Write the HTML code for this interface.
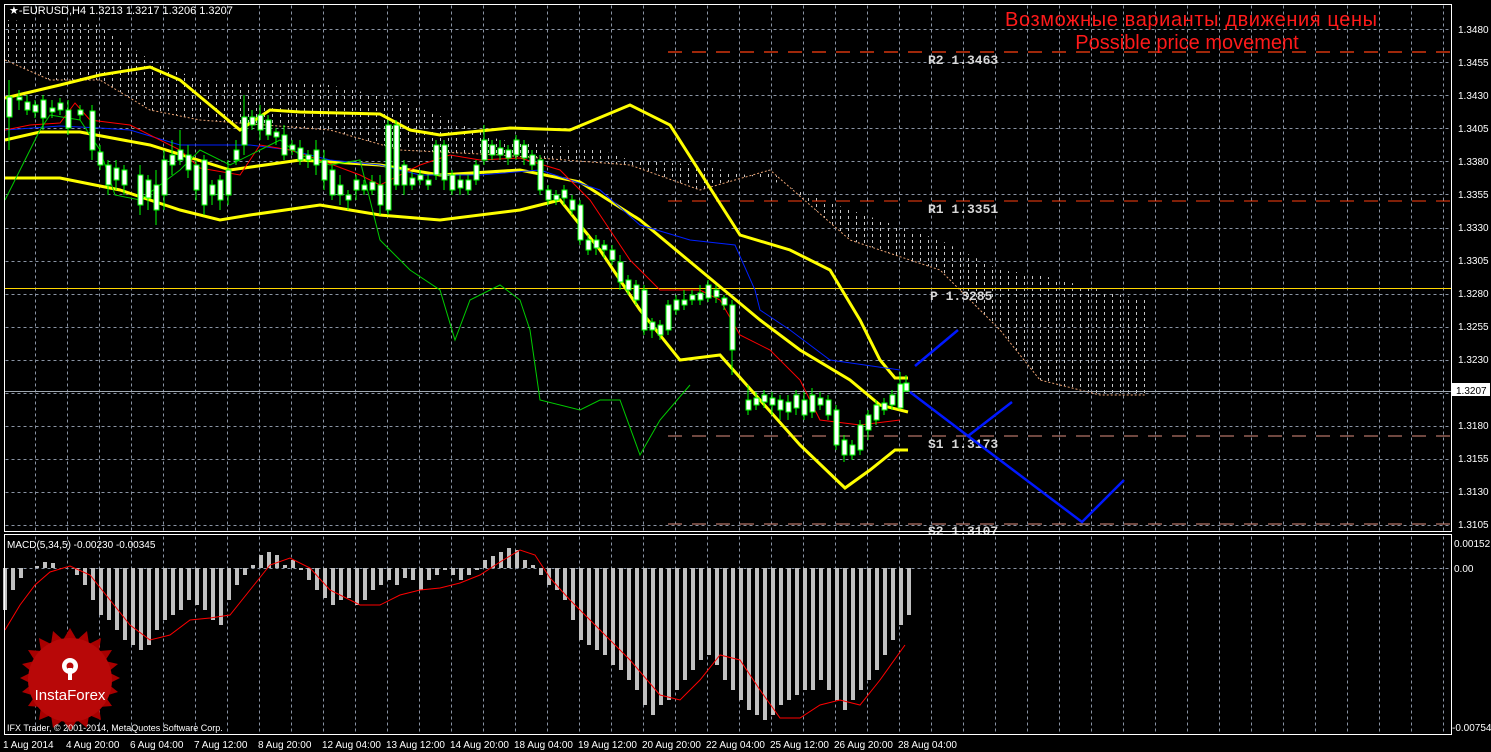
<!DOCTYPE html><html><head><meta charset="utf-8"><style>
html,body{margin:0;padding:0;background:#000;}
svg{display:block;font-family:"Liberation Sans",sans-serif;}
</style></head><body>
<svg width="1491" height="752" viewBox="0 0 1491 752" xmlns="http://www.w3.org/2000/svg">
<defs>
<pattern id="hatch" width="8" height="6" patternUnits="userSpaceOnUse"><rect x="0" y="0" width="1" height="3" fill="#dcdcdc"/></pattern>
</defs>
<rect width="1491" height="752" fill="#000"/>
<!-- grid -->
<g stroke="#8a94a4" stroke-width="1" stroke-dasharray="3,3" transform="translate(0.5,0.5)" shape-rendering="crispEdges">
<path d="M35 5V531M67 5V531M99 5V531M131 5V531M163 5V531M195 5V531M227 5V531M259 5V531M291 5V531M323 5V531M355 5V531M387 5V531M419 5V531M451 5V531M483 5V531M515 5V531M547 5V531M579 5V531M611 5V531M643 5V531M675 5V531M707 5V531M739 5V531M771 5V531M803 5V531M835 5V531M867 5V531M899 5V531M931 5V531M963 5V531M995 5V531M1027 5V531M1059 5V531M1091 5V531M1123 5V531M1155 5V531M1187 5V531M1219 5V531M1251 5V531M1283 5V531M1315 5V531M1347 5V531M1379 5V531M1411 5V531M1443 5V531"/>
<path d="M35 536V734M67 536V734M99 536V734M131 536V734M163 536V734M195 536V734M227 536V734M259 536V734M291 536V734M323 536V734M355 536V734M387 536V734M419 536V734M451 536V734M483 536V734M515 536V734M547 536V734M579 536V734M611 536V734M643 536V734M675 536V734M707 536V734M739 536V734M771 536V734M803 536V734M835 536V734M867 536V734M899 536V734M931 536V734M963 536V734M995 536V734M1027 536V734M1059 536V734M1091 536V734M1123 536V734M1155 536V734M1187 536V734M1219 536V734M1251 536V734M1283 536V734M1315 536V734M1347 536V734M1379 536V734M1411 536V734M1443 536V734"/>
<path d="M5 29H1451M5 62H1451M5 95H1451M5 128H1451M5 161H1451M5 194H1451M5 228H1451M5 261H1451M5 294H1451M5 327H1451M5 360H1451M5 393H1451M5 426H1451M5 459H1451M5 492H1451M5 525H1451M5 568H1451"/>
</g>
<!-- cloud -->
<path d="M5 20L100 25L150 60L200 80L330 85L400 100L500 140L600 150L630 160L700 165L770 180L850 210L940 240L1000 270L1040 275L1100 290L1145 300L1145 395L1100 395L1040 380L1000 330L940 270L850 240L770 170L700 190L630 165L500 155L400 150L330 130L200 120L150 110L100 80L50 80L5 60Z" fill="url(#hatch)" opacity="0.9"/>
<polyline points="5,60 50,80 100,80 150,110 200,120 330,130 400,150 500,155 630,165 700,190 770,170 850,240 940,270 1000,330 1040,380 1100,395 1145,395" fill="none" stroke="#e8a070" stroke-width="1" stroke-dasharray="2,2"/>
<!-- levels -->
<path d="M668 52H1451" stroke="#ff4010" stroke-width="1.3" stroke-dasharray="14,10"/>
<path d="M668 201H1451" stroke="#ff4010" stroke-width="1" stroke-dasharray="14,10"/>
<path d="M668 436H1451" stroke="#e09080" stroke-width="1" stroke-dasharray="14,10"/>
<path d="M668 524H1451" stroke="#e09080" stroke-width="1" stroke-dasharray="14,10"/>
<path d="M5 288.5H1451" stroke="#ffd700" stroke-width="1"/>
<path d="M5 391.5H1451" stroke="#a0a8b0" stroke-width="1"/>
<g font-family="Liberation Mono,monospace" font-size="13" fill="#d8d8d8" font-weight="bold">
<text x="928" y="64">R2 1.3463</text><text x="928" y="213">R1 1.3351</text><text x="930" y="300">P 1.3285</text><text x="928" y="448">S1 1.3173</text><text x="928" y="535">S2 1.3107</text>
</g>
<!-- bands -->
<g fill="none" stroke="#ffff00" stroke-width="3">
<polyline points="5,98 60,85 100,75 150,67 180,80 240,130 270,110 300,112 380,114 410,130 440,135 510,128 570,130 630,105 670,125 740,235 790,250 830,270 860,320 880,360 895,378 908,378"/>
<polyline points="5,140 40,132 80,132 150,145 230,170 300,160 380,165 440,175 520,170 580,182 640,220 700,270 760,320 800,350 850,380 880,405 908,412"/>
<polyline points="5,178 60,178 120,190 180,210 220,220 250,215 320,205 380,215 440,220 520,210 560,200 600,250 640,310 680,360 720,355 760,400 800,445 845,488 870,470 895,450 908,450"/>
</g>
<polyline points="5,130 60,126 100,128 130,130 180,145 250,145 290,150 330,160 380,165 420,175 480,175 540,170 600,190 640,225 690,240 735,245 755,290 760,310 790,330 830,360 900,370" fill="none" stroke="#0020ff" stroke-width="1"/>
<polyline points="5,130 30,125 60,123 75,103 90,120 130,125 180,150 200,168 240,175 260,145 290,150 320,160 360,175 380,185 420,165 450,155 480,160 520,158 560,170 590,200 610,230 630,260 660,290 700,290 720,300 740,335 770,350 800,380 820,420 860,425 900,420" fill="none" stroke="#ff0000" stroke-width="1"/>
<polyline points="5,200 15,180 30,150 40,130 50,115 80,120 100,150 115,195 140,200 180,170 200,150 230,165 260,150 280,140 300,155 330,165 360,160 370,200 380,240 410,270 440,290 455,340 470,300 500,285 520,300 530,330 540,400 580,410 600,400 620,400 640,455 660,420 690,385" fill="none" stroke="#00cc00" stroke-width="1"/>
<!-- candles -->
<path stroke="#00ff00" stroke-width="1" fill="none" d="M9 80V150M19 90V110M27 95V115M35 100V118M43 95V130M52 100V118M60 98V115M68 100V135M80 105V120M92 105V160M100 145V170M108 160V195M116 160V190M124 165V195M140 165V215M148 175V210M156 170V225M164 150V210M172 140V175M180 130V165M188 145V178M196 160V200M204 155V215M212 180V205M220 175V210M228 160V205M236 140V165M244 95V155M252 110V130M260 105V140M268 115V140M276 128V145M284 125V160M292 140V155M300 140V165M308 150V168M316 140V175M324 150V190M332 165V200M340 175V205M348 190V210M356 175V200M364 180V195M372 175V195M380 175V215M388 120V215M396 120V190M404 160V195M412 172V190M420 170V185M428 175V190M436 140V180M444 140V190M452 170V195M460 175V195M468 175V195M476 160V185M484 125V165M492 140V160M500 140V160M508 145V165M516 135V160M524 140V165M532 150V170M540 155V195M548 185V205M556 190V205M564 185V205M572 195V215M580 200V245M588 235V255M596 235V255M604 240V258M612 245V265M620 255V290M628 275V295M636 280V305M644 285V335M652 318V338M660 320V340M668 300V335M676 295V315M684 290V310M692 290V305M700 285V305M708 280V302M716 285V303M724 295V310M732 300V375M748 385V415M756 392V410M764 390V408M772 392V415M780 395V420M788 395V420M796 390V415M804 392V420M812 388V418M820 392V410M828 395V420M836 405V450M844 435V462M852 440V460M860 420V455M868 410V440M876 400V425M884 398V415M892 390V410M900 372V400M906 375V392"/>
<g fill="#fff" stroke="#00ff00" stroke-width="1">
<rect x="7" y="97" width="5" height="20"/><rect x="17" y="97" width="5" height="3"/><rect x="25" y="102" width="5" height="8"/><rect x="33" y="105" width="5" height="7"/><rect x="41" y="100" width="5" height="18"/><rect x="50" y="108" width="5" height="4"/><rect x="58" y="103" width="5" height="7"/><rect x="66" y="110" width="5" height="18"/><rect x="78" y="110" width="5" height="5"/><rect x="90" y="111" width="5" height="39"/><rect x="98" y="152" width="5" height="13"/><rect x="106" y="165" width="5" height="20"/><rect x="114" y="168" width="5" height="12"/><rect x="122" y="170" width="5" height="15"/><rect x="138" y="175" width="5" height="30"/><rect x="146" y="180" width="5" height="18"/><rect x="154" y="185" width="5" height="25"/><rect x="162" y="160" width="5" height="35"/><rect x="170" y="155" width="5" height="10"/><rect x="178" y="150" width="5" height="10"/><rect x="186" y="155" width="5" height="15"/><rect x="194" y="165" width="5" height="25"/><rect x="202" y="160" width="5" height="45"/><rect x="210" y="185" width="5" height="10"/><rect x="218" y="180" width="5" height="20"/><rect x="226" y="170" width="5" height="25"/><rect x="234" y="150" width="5" height="10"/><rect x="242" y="117" width="5" height="28"/><rect x="250" y="117" width="5" height="8"/><rect x="258" y="115" width="5" height="15"/><rect x="266" y="120" width="5" height="15"/><rect x="274" y="132" width="5" height="5"/><rect x="282" y="135" width="5" height="20"/><rect x="290" y="145" width="5" height="5"/><rect x="298" y="148" width="5" height="12"/><rect x="306" y="155" width="5" height="5"/><rect x="314" y="150" width="5" height="15"/><rect x="322" y="160" width="5" height="20"/><rect x="330" y="170" width="5" height="25"/><rect x="338" y="185" width="5" height="10"/><rect x="346" y="195" width="5" height="5"/><rect x="354" y="180" width="5" height="10"/><rect x="362" y="185" width="5" height="5"/><rect x="370" y="182" width="5" height="8"/><rect x="378" y="185" width="5" height="20"/><rect x="386" y="125" width="5" height="85"/><rect x="394" y="125" width="5" height="60"/><rect x="402" y="165" width="5" height="20"/><rect x="410" y="178" width="5" height="7"/><rect x="418" y="175" width="5" height="5"/><rect x="426" y="180" width="5" height="5"/><rect x="434" y="145" width="5" height="30"/><rect x="442" y="145" width="5" height="35"/><rect x="450" y="175" width="5" height="15"/><rect x="458" y="180" width="5" height="8"/><rect x="466" y="180" width="5" height="10"/><rect x="474" y="165" width="5" height="15"/><rect x="482" y="140" width="5" height="20"/><rect x="490" y="145" width="5" height="10"/><rect x="498" y="148" width="5" height="7"/><rect x="506" y="150" width="5" height="8"/><rect x="514" y="140" width="5" height="15"/><rect x="522" y="145" width="5" height="13"/><rect x="530" y="155" width="5" height="10"/><rect x="538" y="160" width="5" height="30"/><rect x="546" y="190" width="5" height="10"/><rect x="554" y="195" width="5" height="5"/><rect x="562" y="190" width="5" height="8"/><rect x="570" y="200" width="5" height="10"/><rect x="578" y="205" width="5" height="35"/><rect x="586" y="240" width="5" height="10"/><rect x="594" y="240" width="5" height="8"/><rect x="602" y="245" width="5" height="5"/><rect x="610" y="250" width="5" height="10"/><rect x="618" y="262" width="5" height="20"/><rect x="626" y="280" width="5" height="10"/><rect x="634" y="285" width="5" height="15"/><rect x="642" y="290" width="5" height="40"/><rect x="650" y="322" width="5" height="8"/><rect x="658" y="325" width="5" height="10"/><rect x="666" y="305" width="5" height="25"/><rect x="674" y="300" width="5" height="10"/><rect x="682" y="300" width="5" height="5"/><rect x="690" y="295" width="5" height="5"/><rect x="698" y="293" width="5" height="7"/><rect x="706" y="285" width="5" height="13"/><rect x="714" y="290" width="5" height="7"/><rect x="722" y="298" width="5" height="7"/><rect x="730" y="305" width="5" height="45"/><rect x="746" y="400" width="5" height="10"/><rect x="754" y="398" width="5" height="7"/><rect x="762" y="395" width="5" height="7"/><rect x="770" y="398" width="5" height="7"/><rect x="778" y="400" width="5" height="10"/><rect x="786" y="402" width="5" height="10"/><rect x="794" y="395" width="5" height="13"/><rect x="802" y="400" width="5" height="15"/><rect x="810" y="395" width="5" height="17"/><rect x="818" y="398" width="5" height="7"/><rect x="826" y="400" width="5" height="15"/><rect x="834" y="410" width="5" height="35"/><rect x="842" y="440" width="5" height="15"/><rect x="850" y="445" width="5" height="10"/><rect x="858" y="425" width="5" height="25"/><rect x="866" y="415" width="5" height="15"/><rect x="874" y="405" width="5" height="15"/><rect x="882" y="403" width="5" height="7"/><rect x="890" y="395" width="5" height="10"/><rect x="898" y="384" width="5" height="24"/><rect x="904" y="383" width="5" height="8"/>
</g>
<!-- projection -->
<g fill="none" stroke="#0018ff" stroke-width="2.5">
<polyline points="915,366 958,330"/>
<polyline points="910,392 968,436 1012,402"/>
<polyline points="968,436 1082,522 1124,480"/>
</g>
<text x="1191" y="26" font-size="20" fill="#ff1a1a" text-anchor="middle" textLength="372">Возможные варианты движения цены</text>
<text x="1187" y="49" font-size="20" fill="#ff1a1a" text-anchor="middle">Possible price movement</text>
<text x="9" y="14" font-size="11" fill="#fff">★-EURUSD,H4  1.3213 1.3217 1.3206 1.3207</text>
<!-- MACD -->
<path stroke="#c0c0c0" stroke-width="4" d="M5 568V610M13 568V590M21 568V578M37 568V566M45 568V562M53 568V563M77 568V575M85 568V585M93 568V600M101 568V615M109 568V620M117 568V630M125 568V640M133 568V645M141 568V650M149 568V645M157 568V630M165 568V620M173 568V615M181 568V610M189 568V600M197 568V605M205 568V610M213 568V620M221 568V625M229 568V600M237 568V585M245 568V575M253 568V565M261 568V555M269 568V552M277 568V555M285 568V565M293 568V560M301 568V570M309 568V580M317 568V590M325 568V598M333 568V605M341 568V600M349 568V598M357 568V605M365 568V600M373 568V590M381 568V585M389 568V580M397 568V585M405 568V578M413 568V580M421 568V590M429 568V580M437 568V575M445 568V570M453 568V575M461 568V580M469 568V575M477 568V570M485 568V560M493 568V556M501 568V552M509 568V548M517 568V550M525 568V560M533 568V565M541 568V575M549 568V585M557 568V590M565 568V600M573 568V620M581 568V640M589 568V645M597 568V650M605 568V655M613 568V665M621 568V670M629 568V680M637 568V690M645 568V705M653 568V715M661 568V705M669 568V700M677 568V690M685 568V680M693 568V670M701 568V660M709 568V655M717 568V665M725 568V680M733 568V690M741 568V700M749 568V710M757 568V715M765 568V720M773 568V715M781 568V705M789 568V700M797 568V695M805 568V690M813 568V690M821 568V680M829 568V690M837 568V700M845 568V710M853 568V700M861 568V690M869 568V680M877 568V670M885 568V655M893 568V640M901 568V625M909 568V615"/>
<polyline points="5,630 20,605 35,585 50,572 70,566 90,575 110,600 130,625 150,640 170,635 190,620 210,618 230,615 250,590 270,565 290,558 310,568 330,590 360,605 380,605 400,595 420,590 440,588 460,583 480,575 500,562 520,550 535,555 550,578 570,600 600,630 630,660 660,695 680,700 700,680 720,655 740,660 760,690 780,718 800,718 820,705 840,700 860,705 880,680 905,645" fill="none" stroke="#ff0000" stroke-width="1"/>
<text x="7" y="548" font-size="10" fill="#fff">MACD(5,34,5) -0.00230 -0.00345</text>
<!-- logo -->
<polygon fill="#a80000" points="70,628 77,640 87,631 89,644 101,638 99,651 112,650 105,661 118,664 108,672 120,678 108,684 118,692 105,696 112,706 99,707 101,720 89,715 87,728 77,720 70,731 63,720 53,728 51,715 39,720 41,707 28,706 35,696 22,692 32,684 20,678 32,672 22,664 35,661 28,650 41,651 39,638 51,644 53,631 63,640"/>
<circle cx="70" cy="680" r="42" fill="#b80808"/>
<g fill="#fff"><circle cx="70" cy="666" r="8"/><circle cx="70" cy="666" r="3.5" fill="#b80808"/><rect x="68" y="668" width="4" height="12"/></g>
<text x="70" y="700" font-size="15" fill="#fff" text-anchor="middle">InstaForex</text>
<text x="7" y="731" font-size="9" fill="#fff">IFX Trader, © 2001-2014, MetaQuotes Software Corp.</text>
<!-- frames -->
<rect x="4.5" y="4.5" width="1447" height="527" fill="none" stroke="#fff" stroke-width="1"/>
<rect x="4.5" y="534.5" width="1447" height="200" fill="none" stroke="#fff" stroke-width="1"/>
<!-- right axis -->
<g font-size="10" fill="#fff">
<text x="1458" y="33">1.3480</text><text x="1458" y="66">1.3455</text><text x="1458" y="99">1.3430</text><text x="1458" y="132">1.3405</text><text x="1458" y="165">1.3380</text><text x="1458" y="198">1.3355</text><text x="1458" y="231">1.3330</text><text x="1458" y="264">1.3305</text><text x="1458" y="297">1.3280</text><text x="1458" y="330">1.3255</text><text x="1458" y="363">1.3230</text><text x="1458" y="429">1.3180</text><text x="1458" y="462">1.3155</text><text x="1458" y="495">1.3130</text><text x="1458" y="528">1.3105</text>
<text x="1454" y="547">0.00152</text><text x="1454" y="572">0.00</text><text x="1452" y="731">-0.00754</text>
</g>
<rect x="1452" y="383" width="38" height="13" fill="#fff"/>
<text x="1456" y="394" font-size="10" fill="#000">1.3207</text>
<!-- bottom axis -->
<g font-size="10" fill="#fff">
<text x="3" y="748">1 Aug 2014</text><text x="66" y="748">4 Aug 20:00</text><text x="130" y="748">6 Aug 04:00</text><text x="194" y="748">7 Aug 12:00</text><text x="258" y="748">8 Aug 20:00</text><text x="322" y="748">12 Aug 04:00</text><text x="386" y="748">13 Aug 12:00</text><text x="450" y="748">14 Aug 20:00</text><text x="514" y="748">18 Aug 04:00</text><text x="578" y="748">19 Aug 12:00</text><text x="642" y="748">20 Aug 20:00</text><text x="706" y="748">22 Aug 04:00</text><text x="770" y="748">25 Aug 12:00</text><text x="834" y="748">26 Aug 20:00</text><text x="898" y="748">28 Aug 04:00</text>
</g>
</svg>
</body></html>
